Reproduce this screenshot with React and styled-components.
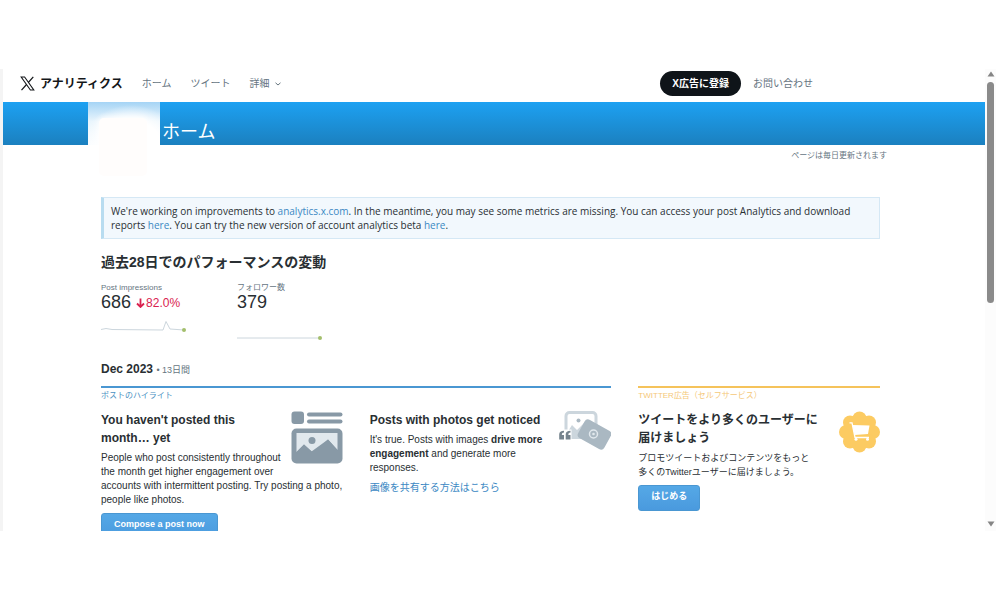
import React from "react";
import styled, { createGlobalStyle } from "styled-components";

const GlobalStyle = createGlobalStyle`
  * {
    box-sizing: border-box;
  }
  body {
    margin: 0;
    background-color: white;
    color: #292f33;
    font-family: "Liberation Sans", "Noto Sans CJK JP", sans-serif;
    font-size: 10px;
    line-height: 14px;
  }
`;

function App() {
  return (
    <Frame>
      <GlobalStyle />
      <Page>
        <Header />
        <Banner>
          <Avatar>
            <AvatarPhoto />
          </Avatar>
          <BannerTitle>ホーム</BannerTitle>
        </Banner>
        <UpdateNote>ページは毎日更新されます</UpdateNote>
        <Content>
          <Notice>
            We're working on improvements to <Link href="#analytics">analytics.x.com</Link>. In the
            meantime, you may see some metrics are missing. You can access your post Analytics and
            download reports <Link href="#reports">here</Link>. You can try the new version of
            account analytics beta <Link href="#beta">here</Link>.
          </Notice>
          <SectionTitle>過去28日でのパフォーマンスの変動</SectionTitle>
          <Metrics />
          <MonthTitle>
            Dec 2023 <MonthDays>• 13日間</MonthDays>
          </MonthTitle>
          <Columns>
            <Highlights />
            <Promotion />
          </Columns>
        </Content>
      </Page>
      <ScrollBar aria-hidden="true">
        <ScrollArrow viewBox="0 0 8 6">
          <path d="M4 0.5 7.5 5.5H0.5z" />
        </ScrollArrow>
        <ScrollTrack>
          <ScrollThumb />
        </ScrollTrack>
        <ScrollArrow viewBox="0 0 8 6">
          <path d="M4 5.5 7.5 0.5H0.5z" />
        </ScrollArrow>
      </ScrollBar>
    </Frame>
  );
}

function Header() {
  return (
    <HeaderWrapper>
      <Logo href="#top">
        <svg viewBox="0 0 15 15" fill="none" stroke="currentColor">
          <path d="M1.2 1H4.6L13.8 14H10.400z" strokeWidth="1.100" />
          <path d="M13.300 0.800 8.300 6.500M6.500 8.500 1.500 14.200" strokeWidth="1.200" />
        </svg>
        アナリティクス
      </Logo>
      <NavLink href="#home">ホーム</NavLink>
      <NavLink href="#tweets">ツイート</NavLink>
      <MoreBtn>
        詳細
        <svg width="6" height="4" viewBox="0 0 6 4">
          <path d="M0.5 0.8 3 3 5.5 0.8" fill="none" stroke="currentColor" />
        </svg>
      </MoreBtn>
      <HeaderRight>
        <SignupBtn>X広告に登録</SignupBtn>
        <NavLink href="#contact">お問い合わせ</NavLink>
      </HeaderRight>
    </HeaderWrapper>
  );
}

function Metrics() {
  return (
    <MetricRow>
      <Metric>
        <MetricLabel>Post impressions</MetricLabel>
        <MetricValue>
          686
          <Change>
            <svg width="9" height="10" viewBox="0 0 9 10">
              <path d="M4.5 0.5V9M1 5.5 4.5 9 8 5.5" fill="none" stroke="currentColor" strokeWidth="1.8" />
            </svg>
            82.0%
          </Change>
        </MetricValue>
        <Sparkline viewBox="0 0 86 14">
          <path d="M0 9.5 5 8.5 11 9.5 62 10 65 1.5 69 9 83 10" />
          <circle cx="83" cy="10" r="2" />
        </Sparkline>
      </Metric>
      <Metric>
        <MetricLabel>フォロワー数</MetricLabel>
        <MetricValue>379</MetricValue>
        <Sparkline viewBox="0 0 86 14" $low>
          <path d="M0 10H83" />
          <circle cx="83" cy="10" r="2" />
        </Sparkline>
      </Metric>
    </MetricRow>
  );
}

function Highlights() {
  return (
    <Section $wide $color="#4a97d2">
      <SectionLabel $color="#4a90c2">ポストのハイライト</SectionLabel>
      <CardGrid>
        <Card>
          <CardIcon>
            <svg width="52" height="53" viewBox="0 0 52 53" fill="#8899a6">
              <rect x="0.5" y="0.5" width="12.5" height="12.5" rx="3" />
              <rect x="16" y="1.5" width="35.5" height="4" rx="2" />
              <rect x="16" y="8.5" width="35.5" height="4" rx="2" />
              <rect x="0.5" y="17.5" width="51" height="35" rx="5" />
              <path d="M5.500 22H46.500V39L37 28.500 26.500 38.500 22.500 42 13 33.500 5.500 41z" fill="#e1e8ed" />
              <path d="M5 44V41.500L13 33.500 20.500 40.500 37 28.500 47 39.500V44z" />
              <circle cx="21" cy="29.500" r="3.500" />
            </svg>
          </CardIcon>
          <CardTitle>
            You haven't posted this
            <br />
            month… yet
          </CardTitle>
          <CardText>
            People who post consistently throughout the month get higher engagement over accounts
            with intermittent posting. Try posting a photo, people like photos.
          </CardText>
          <ActionBtn>Compose a post now</ActionBtn>
        </Card>
        <Card>
          <CardIcon>
            <svg width="52" height="39" viewBox="0 0 52 39">
              <rect x="7" y="1.500" width="30" height="25" rx="3.500" fill="white" stroke="#ccd6dd" strokeWidth="3" />
              <path d="M8 22 13 14 18 19 25 12 33 20V26H8z" fill="#ccd6dd" />
              <circle cx="19.500" cy="9.500" r="2" fill="#aab8c2" />
              <path d="M-1 18.500H12.500V30H-1z" fill="white" />
              <rect x="-15" y="-10.500" width="30" height="21" rx="4" fill="#aab8c2" transform="translate(35.500 23.500) rotate(29)" />
              <circle cx="34.500" cy="23" r="4" fill="none" stroke="#e1e8ed" strokeWidth="1.500" />
              <circle cx="34.500" cy="23" r="1.300" fill="#e1e8ed" />
              <path
                d="M0.200 28.500V23.500C0.200 21 2 19.800 5 19.800V21.500C3.600 21.500 2.800 22.300 2.800 24H5V28.500zM6.700 28.500V23.500C6.700 21 8.500 19.800 11.500 19.800V21.500C10.100 21.500 9.300 22.300 9.300 24H11.500V28.500z"
                fill="#76848e"
              />
            </svg>
          </CardIcon>
          <CardTitle>Posts with photos get noticed</CardTitle>
          <CardText>
            It's true. Posts with images <b>drive more engagement</b> and generate more responses.
          </CardText>
          <Link href="#photos">画像を共有する方法はこちら</Link>
        </Card>
      </CardGrid>
    </Section>
  );
}

function Promotion() {
  return (
    <Section $color="#f5c35b">
      <SectionLabel $color="#f5c878">TWITTER広告（セルフサービス）</SectionLabel>
      <Card>
        <CardIcon>
          <svg width="41" height="42" viewBox="0 0 41 42">
            <g fill="#fccb62">
              <circle cx="20.500" cy="21" r="16" />
              <circle cx="20.500" cy="7.500" r="7" />
              <circle cx="30" cy="11.500" r="7" />
              <circle cx="34" cy="21" r="7" />
              <circle cx="30" cy="30.500" r="7" />
              <circle cx="20.500" cy="34.500" r="7" />
              <circle cx="11" cy="30.500" r="7" />
              <circle cx="7" cy="21" r="7" />
              <circle cx="11" cy="11.500" r="7" />
            </g>
            <path d="M13.500 14 30.500 14.500 29 23 15.500 24z" fill="white" />
            <path d="M10.500 11.800h2.500L16 26.500h14" fill="none" stroke="white" strokeWidth="1.300" />
            <circle cx="17" cy="28.300" r="1.500" fill="white" />
            <circle cx="28.500" cy="28.300" r="1.500" fill="white" />
          </svg>
        </CardIcon>
        <CardTitle>
          ツイートをより多くのユーザーに
          <br />
          届けましょう
        </CardTitle>
        <CardText $small>
          プロモツイートおよびコンテンツをもっと
          <br />
          多くのTwitterユーザーに届けましょう。
        </CardText>
        <ActionBtn>はじめる</ActionBtn>
      </Card>
    </Section>
  );
}

const Frame = styled.div`
  display: flex;
  height: calc(100vh - 138px);
  margin: 69px 4px 69px 0;
  border-left: 3px solid #f4f4f4;
  overflow: hidden;
`;

const Page = styled.div`
  flex: 1;
  min-width: 0;
`;

const HeaderWrapper = styled.header`
  display: flex;
  align-items: center;
  gap: 19px;
  height: 33px;
  padding: 0 172px 4px 17px;
`;

const Logo = styled.a`
  display: flex;
  align-items: center;
  gap: 5px;
  color: #14171a;
  font-size: 12px;
  font-weight: bold;
  text-decoration: none;

  svg {
    width: 15px;
    height: 15px;
  }
`;

const NavLink = styled.a`
  color: #66757f;
  text-decoration: none;
`;

const MoreBtn = styled.button`
  display: flex;
  align-items: center;
  gap: 6px;
  padding: 0;
  border: none;
  background: none;
  color: #66757f;
  font: inherit;
`;

const HeaderRight = styled.div`
  display: flex;
  align-items: center;
  gap: 12px;
  margin-left: auto;
`;

const SignupBtn = styled.button`
  height: 25px;
  padding: 0 12px;
  border: none;
  border-radius: 13px;
  background-color: #0f1419;
  color: white;
  font: inherit;
  font-weight: bold;
`;

const Banner = styled.div`
  display: flex;
  align-items: flex-end;
  gap: 2px;
  height: 43px;
  padding-left: 85px;
  background: linear-gradient(#1da1f2, #1b80bf);
`;

const Avatar = styled.div`
  align-self: flex-start;
  width: 72px;
  height: 43px;
  padding: 16px 13px 0 11px;
  background:
    radial-gradient(ellipse 50px 40px at 60% 100%, white 60%, transparent),
    linear-gradient(#a5d4f5, #e9f5fd 45%, #f8fcff);
`;

const AvatarPhoto = styled.div`
  height: 58px;
  border-radius: 5px;
  background-color: #fffdfc;
  box-shadow: 0 0 6px white;
`;

const BannerTitle = styled.h1`
  margin: 0;
  color: white;
  font-size: 18px;
  font-weight: normal;
  line-height: 26px;
`;

const UpdateNote = styled.p`
  margin: 4px 98px 0 0;
  color: #66757f;
  font-size: 8px;
  text-align: right;
`;

const Content = styled.main`
  padding: 34px 105px 0 98px;
`;

const Notice = styled.p`
  margin: 0;
  padding: 6px 8px 6px 7px;
  border: 1px solid #d5e8f5;
  border-left: 3px solid #b8dcf0;
  background-color: #f2f8fd;
  font-family: "Open Sans", "Liberation Sans", sans-serif;
`;

const Link = styled.a`
  color: #3b88c3;
  text-decoration: none;
`;

const SectionTitle = styled.h2`
  margin: 13px 0 10px;
  font-size: 14px;
  line-height: 20px;
`;

const MetricRow = styled.div`
  display: flex;
  gap: 50px;
`;

const Metric = styled.div`
  width: 86px;
`;

const MetricLabel = styled.div`
  color: #66757f;
  font-size: 8px;
  line-height: 12px;
`;

const MetricValue = styled.div`
  display: flex;
  align-items: baseline;
  gap: 5px;
  font-size: 18px;
  line-height: 17px;
`;

const Change = styled.span`
  display: flex;
  align-items: center;
  gap: 1px;
  color: #d9224f;
  font-size: 12px;
`;

const Sparkline = styled.svg`
  display: block;
  width: 86px;
  height: 14px;
  margin-top: ${(props) => (props.$low ? "17px" : "8px")};

  path {
    fill: none;
    stroke: #ccd6dd;
  }
  circle {
    fill: #a3bf6c;
  }
`;

const MonthTitle = styled.h2`
  margin: 19px 0 8px;
  font-size: 12px;
  line-height: 16px;
`;

const MonthDays = styled.span`
  color: #66757f;
  font-size: 9px;
  font-weight: normal;
`;

const Columns = styled.div`
  display: grid;
  grid-template-columns: repeat(3, 1fr);
  gap: 27px;
`;

const Section = styled.section`
  grid-column: span ${(props) => (props.$wide ? 2 : 1)};
  border-top: 2px solid ${(props) => props.$color};
`;

const SectionLabel = styled.div`
  margin: 2px 0 9px;
  color: ${(props) => props.$color};
  font-size: 8px;
  line-height: 12px;
`;

const CardGrid = styled.div`
  display: grid;
  grid-template-columns: 1fr 1fr;
  gap: 27px;
`;

const Card = styled.article``;

const CardIcon = styled.div`
  float: right;
  min-height: 56px;
  margin-left: 8px;

  svg {
    display: block;
  }
`;

const CardTitle = styled.h3`
  margin: 0 0 4px;
  font-size: 12px;
  line-height: 18px;
`;

const CardText = styled.p`
  margin: 0 0 6px;
  font-size: ${(props) => (props.$small ? "9px" : "10px")};
`;

const ActionBtn = styled.button`
  padding: 3px 12px 7px;
  border: 1px solid #4a97d2;
  border-radius: 3px;
  background: linear-gradient(#55a8e6, #4a9ade);
  color: white;
  font: inherit;
  font-size: 9px;
  font-weight: bold;
`;

const ScrollBar = styled.div`
  display: flex;
  flex-direction: column;
  align-items: center;
  width: 11px;
  padding: 2px 0 4px;
  background-color: #fcfcfc;
`;

const ScrollArrow = styled.svg`
  width: 8px;
  height: 6px;
  fill: #858585;
`;

const ScrollTrack = styled.div`
  flex: 1;
  width: 7px;
  padding: 5px 0;
`;

const ScrollThumb = styled.div`
  height: 51%;
  border-radius: 4px;
  background-color: #8a8a8a;
`;

export default App;
